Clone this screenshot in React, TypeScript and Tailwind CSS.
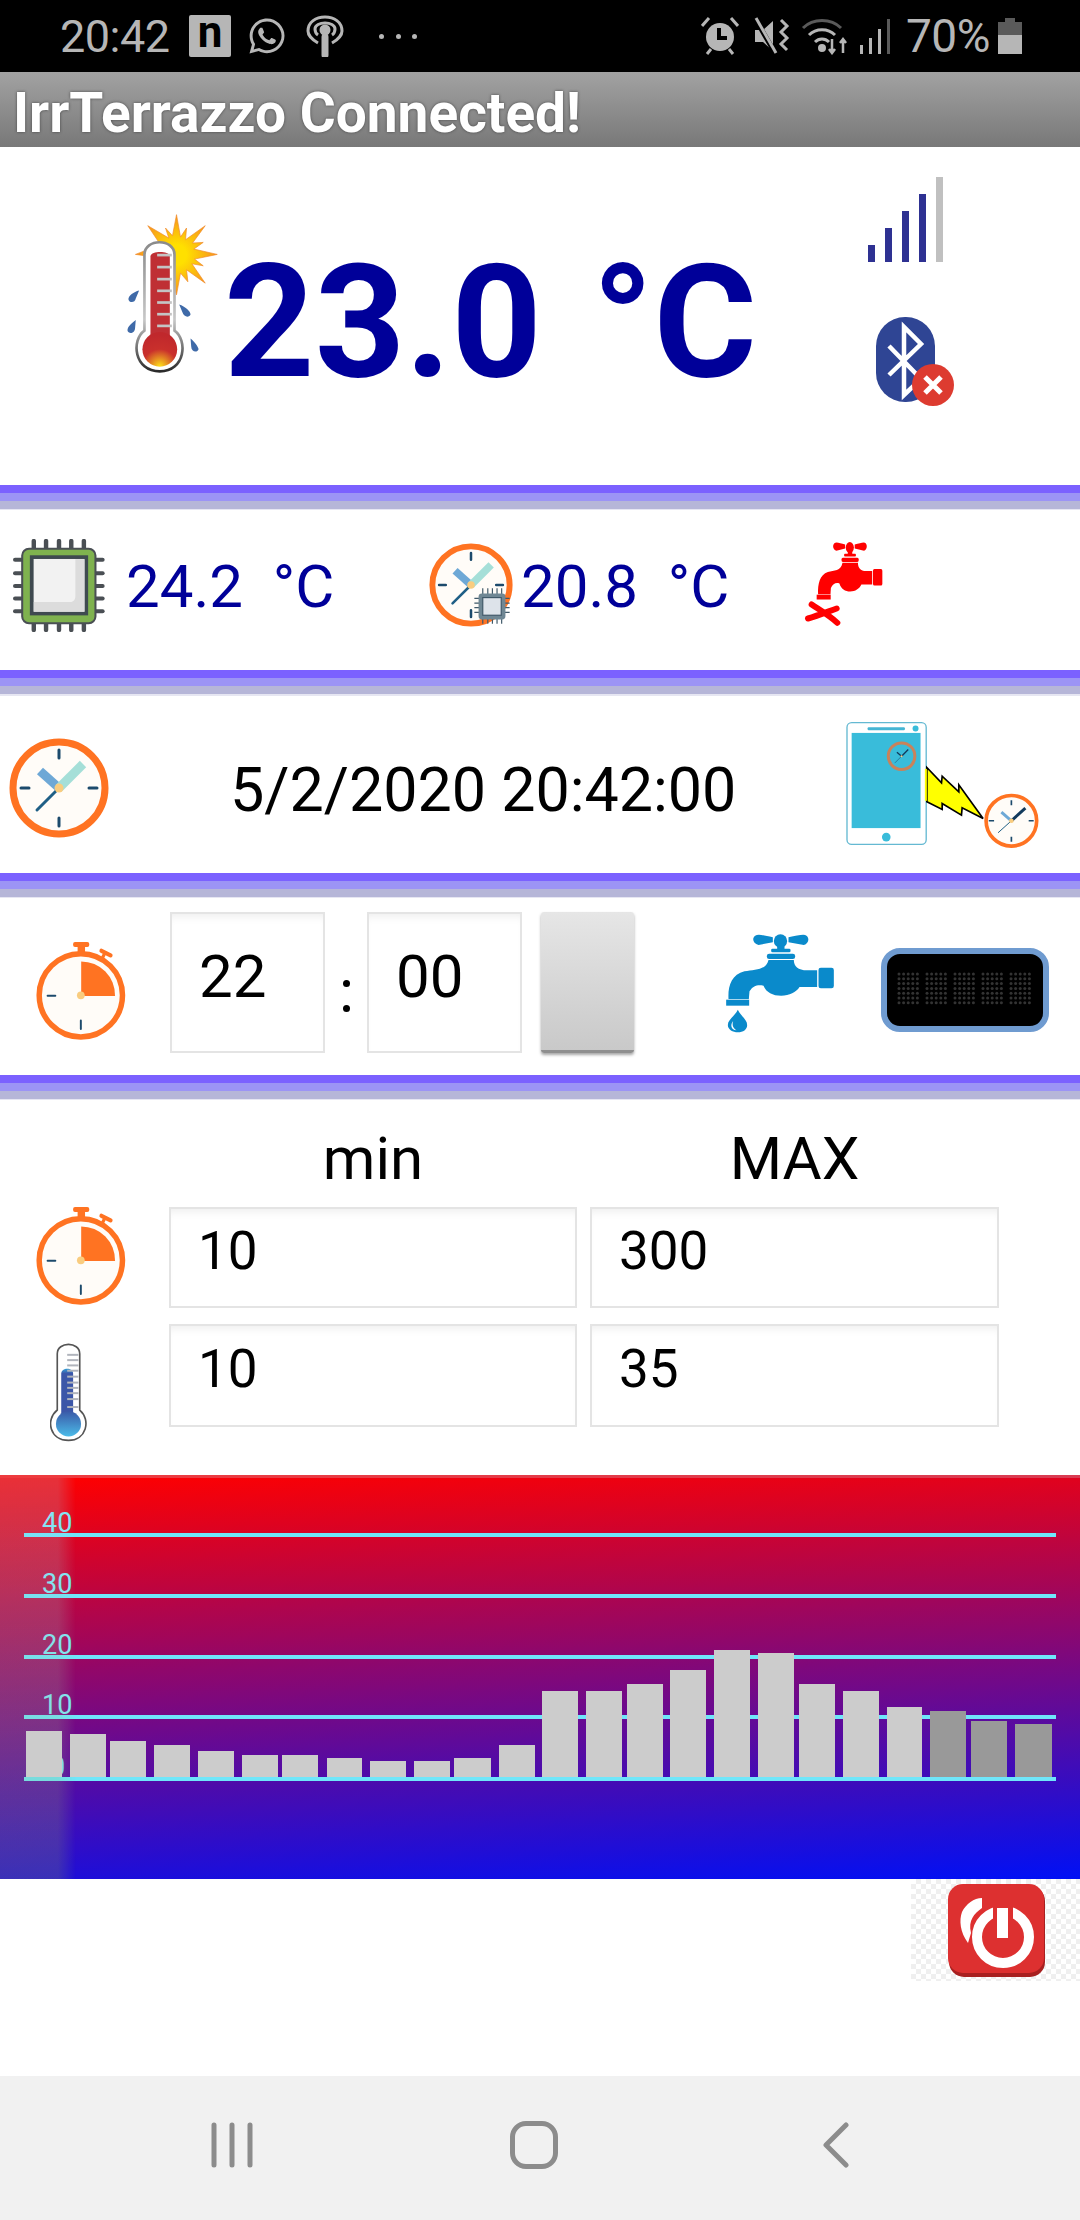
import React from "react";
import { FaWhatsapp } from "react-icons/fa";

function Sep() {
  return (
    <div className="flex flex-col h-[25px] shrink-0">
      <div className="h-[8px] bg-[#7b61ff]" />
      <div className="h-[8px] bg-[#9c94f5]" />
      <div className="h-[8px] bg-[#b6b6d8]" />
      <div className="h-[1px] bg-[#e6e6f2]" />
    </div>
  );
}

function Clock({ className, chip }: { className: string; chip?: boolean }) {
  return (
    <svg viewBox="0 0 100 100" className={className}>
      <circle cx="50" cy="50" r="46" fill="#fffcf8" stroke="#ff7322" strokeWidth="7" />
      <path d="M50 12V20M50 80V88M12 50H20M80 50H88" stroke="#1c4a6c" strokeWidth="3" strokeLinecap="round" />
      <path d="M50 50L31 33" stroke="#6ea8d6" strokeWidth="9" />
      <path d="M50 50L74 26" stroke="#a5dfd8" strokeWidth="9" />
      <path d="M50 50L28 72" stroke="#1f5f86" strokeWidth="3" strokeLinecap="round" />
      <circle cx="50" cy="50" r="4.5" fill="#f9cc7f" />
      {chip && (
        <g>
          <path d="M54 66H96M54 71.5H96M54 77H96M54 82.5H96M64 54V96M70 54V96M75.5 54V96M81 54V96M86.5 54V96" stroke="#3f5868" strokeWidth="1.4" />
          <rect x="59" y="60" width="32" height="31" rx="4" fill="#6f8794" />
          <rect x="64" y="65" width="22" height="21" fill="#dde3ea" stroke="#3f5868" strokeWidth="1.4" />
        </g>
      )}
    </svg>
  );
}

function Stopwatch({ className }: { className: string }) {
  return (
    <svg viewBox="100 70 285 310" className={className}>
      <rect x="218" y="75" width="50" height="15" rx="6" fill="#ff7322" />
      <rect x="232" y="88" width="23" height="22" fill="#ff7322" />
      <path d="M306 102L334 116" stroke="#ff7322" strokeWidth="13" strokeLinecap="round" />
      <path d="M315 112L308 126" stroke="#ff7322" strokeWidth="10" />
      <circle cx="242" cy="240" r="129" fill="#fffcf8" stroke="#ff7322" strokeWidth="17" />
      <path d="M243 135A105 105 0 0 1 348 242L243 242Z" fill="#ff7322" />
      <path d="M139 241H163M242 318V344" stroke="#1c4a6c" strokeWidth="6" strokeLinecap="round" />
      <circle cx="242" cy="240" r="12" fill="#f9cc7f" />
    </svg>
  );
}

function TapShape({ color }: { color: string }) {
  return (
    <g fill={color}>
      <path d="M275 113C250 108 232 102 222 108C211 116 216 132 232 136L275 128Z" />
      <path d="M322 113C350 108 368 102 376 108C386 116 382 132 368 136L322 128Z" />
      <circle cx="298" cy="124" r="20" />
      <rect x="288" y="138" width="22" height="12" />
      <rect x="270" y="147" width="58" height="11" rx="4" />
      <rect x="257" y="162" width="85" height="16" rx="7" />
      <path d="M262 181L338 181C338 200 350 212 378 212L408 212L408 262L355 262C345 278 325 288 300 288C275 288 255 278 247 258C230 254 215 258 205 275L203 298L142 298C140 260 150 225 190 215C220 210 255 212 262 181Z" />
      <rect x="135" y="300" width="69" height="18" />
      <rect x="412" y="204" width="46" height="62" rx="7" />
    </g>
  );
}

function ThermoHot() {
  const ray =
    "M228 165L240 232L258 205L255 240L314 198L276 250L308 248L280 268L350 284L282 298L308 318L274 312L314 370L258 330L262 366L240 340L228 405L205 330L150 290L105 284L180 255L142 198L205 235L195 205L216 228Z";
  return (
    <svg viewBox="80 160 275 485" className="w-[92px] h-[162px] shrink-0">
      <defs>
        <radialGradient id="sun" cx="228" cy="285" r="120" gradientUnits="userSpaceOnUse">
          <stop offset="0.25" stopColor="#ffe000" />
          <stop offset="1" stopColor="#f7941d" />
        </radialGradient>
        <radialGradient id="bulb" cx="178" cy="620" r="95" gradientUnits="userSpaceOnUse">
          <stop offset="0" stopColor="#ffe21a" />
          <stop offset="0.55" stopColor="#c9302c" />
          <stop offset="1" stopColor="#c0282c" />
        </radialGradient>
        <linearGradient id="glass" x1="0" y1="0" x2="0" y2="1">
          <stop offset="0" stopColor="#8a8a8a" />
          <stop offset="0.6" stopColor="#c8c8c8" />
          <stop offset="1" stopColor="#2a2a2a" />
        </linearGradient>
      </defs>
      <path d={ray} fill="url(#sun)" stroke="#f08a2c" strokeWidth="2" />
      <path d="M132 512L132 285C132 235 222 235 222 285L222 512C262 540 255 634 178 634C100 634 92 540 132 512Z" fill="#fff" stroke="url(#glass)" strokeWidth="8" />
      <path d="M150 290C150 272 208 272 208 290L208 530L150 530Z" fill="#bf2f34" />
      <circle cx="178" cy="568" r="52" fill="url(#bulb)" />
      {[286, 322, 358, 393, 428, 463, 498].map((y) => (
        <rect key={y} x={170} y={y - 4} width="44" height="8" fill="#c4c4c4" />
      ))}
      {[
        "M116 392C100 396 84 408 84 418C86 430 104 430 106 416Z",
        "M106 480C92 490 78 504 82 514C88 524 104 518 104 504Z",
        "M236 434C254 440 270 454 270 464C266 474 250 472 246 458Z",
        "M270 536C282 546 294 562 294 568C290 580 272 576 272 560Z",
      ].map((d) => (
        <path key={d} d={d} fill="#3f6aa8" />
      ))}
    </svg>
  );
}

function ThermoCold() {
  return (
    <svg viewBox="150 488 112 298" className="w-[37px] h-[99px] shrink-0">
      <defs>
        <linearGradient id="cold" x1="0" y1="0" x2="0" y2="1">
          <stop offset="0" stopColor="#33a0d8" />
          <stop offset="0.1" stopColor="#3b56a8" />
          <stop offset="1" stopColor="#3b56a8" />
        </linearGradient>
        <linearGradient id="coldBulb" x1="0" y1="0" x2="0" y2="1">
          <stop offset="0" stopColor="#3a5aa8" />
          <stop offset="1" stopColor="#4bbbe8" />
        </linearGradient>
      </defs>
      <path d="M172 690L172 520C172 482 240 482 240 520L240 690C275 720 260 782 206 782C150 782 135 720 172 690Z" fill="#fff" stroke="#555" strokeWidth="5" />
      <path d="M184 580C184 560 220 560 220 580L220 710L184 710Z" fill="url(#cold)" />
      <circle cx="206" cy="732" r="38" fill="url(#coldBulb)" />
      {[520, 536, 552, 568, 586, 604, 620, 636, 654, 678].map((y) => (
        <rect key={y} x={202} y={y} width="34" height="6" fill="#b0b4bc" />
      ))}
    </svg>
  );
}

function Chip() {
  const xs = [98, 134, 172, 208, 245];
  const ys = [270, 310, 348, 385, 423];
  return (
    <svg viewBox="37 208 270 277" preserveAspectRatio="none" className="w-[92px] h-[93px] shrink-0">
      {xs.map((x) => (
        <path key={x} d={`M${x} 214V479`} stroke="#4a4f54" strokeWidth="13" strokeLinecap="round" />
      ))}
      {ys.map((y) => (
        <path key={y} d={`M43 ${y}H300`} stroke="#4a4f54" strokeWidth="12" strokeLinecap="round" />
      ))}
      <rect x="64" y="237" width="215" height="222" rx="20" fill="#7fb24f" stroke="#4a4f54" strokeWidth="6" />
      <rect x="92" y="262" width="160" height="168" fill="#f2f2f2" stroke="#3f4a50" strokeWidth="11" />
      <path d="M98 396H205C215 396 220 388 220 378V268H247V425H98Z" fill="#dcdcdc" />
    </svg>
  );
}

function RedTap() {
  return (
    <svg viewBox="130 90 240 257" className="w-[80px] h-[86px] shrink-0">
      <g transform="translate(168 92) scale(.61 .805) translate(-135 -103)">
        <TapShape color="#ff0000" />
      </g>
      <path d="M153 280C180 298 205 312 230 335M142 322C170 314 200 302 228 292" stroke="#ff0000" strokeWidth="18" strokeLinecap="round" fill="none" />
    </svg>
  );
}

function PhoneSync() {
  return (
    <svg viewBox="250 630 592 386" className="w-[197px] h-[129px] shrink-0">
      <rect x="256" y="637" width="238" height="366" rx="14" fill="#fff" stroke="#64b9d2" strokeWidth="4" />
      <rect x="270" y="668" width="207" height="286" fill="#39bcda" />
      <rect x="318" y="651" width="112" height="9" rx="3" fill="#45b5d4" />
      <circle cx="462" cy="655" r="9" fill="#39bcda" />
      <circle cx="374" cy="981" r="13" fill="#39bcda" />
      <circle cx="420" cy="738" r="40" fill="#39bcda" stroke="#c9825a" strokeWidth="9" />
      <path d="M420 738L440 718M420 738L406 726" stroke="#123a5c" strokeWidth="4" />
      <path d="M420 738L400 758" stroke="#123a5c" strokeWidth="1.5" />
      <circle cx="420" cy="738" r="3" fill="#f9cc7f" />
      <path d="M496 772L540 818L542 798L592 845L592 824L665 925L602 893L600 915L542 880L542 898L496 875Z" fill="#ffff00" stroke="#000" strokeWidth="5" />
      <rect x="490" y="776" width="6" height="96" fill="#ffff00" />
      <circle cx="750" cy="932" r="76" fill="#fffcf8" stroke="#ff7322" strokeWidth="11" />
      <path d="M750 870V885M750 980V995M682 932H698M802 932H817" stroke="#1c4a6c" strokeWidth="5" />
      <path d="M750 932L720 906" stroke="#6ea8d6" strokeWidth="9" />
      <path d="M750 932L792 894" stroke="#123a5c" strokeWidth="9" />
      <path d="M750 932L710 968" stroke="#1f5f86" strokeWidth="3" />
      <circle cx="750" cy="932" r="7" fill="#f9cc7f" />
    </svg>
  );
}

function Led() {
  const dots: React.ReactNode[] = [];
  for (let g = 0; g < 5; g++)
    for (let c = 0; c < 5; c++)
      for (let r = 0; r < 7; r++)
        dots.push(<circle key={`${g}-${c}-${r}`} cx={18 + g * 28 + c * 4.6} cy={26 + r * 4.8} r="1.5" fill="#333333" />);
  return (
    <svg viewBox="0 0 168 84" className="w-[168px] h-[84px] shrink-0">
      <rect x="3" y="3" width="162" height="78" rx="16" fill="#000" stroke="#6f9bd0" strokeWidth="6" />
      {dots}
    </svg>
  );
}

function Box({ w, h, size, text, pt }: { w: string; h: string; size: string; text: string; pt: string }) {
  return (
    <div className={`${w} ${h} ${size} ${pt} shrink-0 pl-[27px] leading-none text-black bg-white border-2 border-[#e4e4e4] shadow-[inset_0_8px_10px_-6px_rgba(0,0,0,0.08)]`}>
      {text}
    </div>
  );
}

const BARS: [number, number, number, string][] = [
  [26, 62, 1731, "#cccccc"], [70, 106, 1734, "#cccccc"], [110, 146, 1741, "#cccccc"], [154, 190, 1745, "#cccccc"],
  [198, 234, 1751, "#cccccc"], [242, 278, 1755, "#cccccc"], [282, 318, 1755, "#cccccc"], [327, 362, 1758, "#cccccc"],
  [370, 406, 1761, "#cccccc"], [414, 450, 1761, "#cccccc"], [454, 491, 1758, "#cccccc"], [499, 535, 1745, "#cccccc"],
  [542, 578, 1691, "#cccccc"], [586, 622, 1691, "#cccccc"], [627, 663, 1684, "#cccccc"], [670, 706, 1670, "#cccccc"],
  [714, 750, 1650, "#cccccc"], [758, 794, 1653, "#cccccc"], [799, 835, 1684, "#cccccc"], [843, 879, 1691, "#cccccc"],
  [887, 922, 1707, "#cccccc"], [930, 966, 1711, "#999999"], [971, 1007, 1721, "#999999"], [1015, 1052, 1724, "#999999"],
];

function Chart() {
  const lines: [number, string, number][] = [[60, "40", 42], [121, "30", 42], [182, "20", 42], [242, "10", 42], [304, "0", 50]];
  return (
    <div className="h-[404px] shrink-0 bg-[linear-gradient(177deg,#ff0000_1%,#0010f5_100%)]">
      <svg viewBox="0 0 1080 404" className="w-[1080px] h-[404px] block">
        <defs>
          <linearGradient id="fade" x1="0" y1="0" x2="1" y2="0">
            <stop offset="0.76" stopColor="#fff" />
            <stop offset="1" stopColor="#000" />
          </linearGradient>
          <linearGradient id="tint" x1="0" y1="0" x2="0" y2="1">
            <stop offset="0" stopColor="#9bdaff" stopOpacity="0.22" />
            <stop offset="1" stopColor="#9bad49" stopOpacity="0.22" />
          </linearGradient>
          <mask id="fadeMask" maskUnits="userSpaceOnUse" x="0" y="0" width="76" height="404">
            <rect x="0" y="0" width="76" height="404" fill="url(#fade)" />
          </mask>
        </defs>
        {lines.map(([y, t, x]) => (
          <g key={t}>
            <text x={x} y={y - 3} fontSize="27" fill="#7fe8f8" fontFamily="Roboto, sans-serif">{t}</text>
            <rect x="24" y={y - 2} width="1032" height="4" fill="#6fe6fa" />
          </g>
        ))}
        <rect x="0" y="3" width="76" height="401" fill="url(#tint)" mask="url(#fadeMask)" />
        <rect x="0" y="0" width="1080" height="3" fill="#c4c4d0" fillOpacity="0.3" />
        {BARS.map(([a, b, top, c]) => (
          <rect key={a} x={a} y={top - 1475} width={b - a} height={1777 - top} fill={c} />
        ))}
      </svg>
    </div>
  );
}

function PowerButton() {
  return (
    <svg viewBox="0 0 97 93" className="w-[97px] h-[93px]">
      <rect x="1" y="2" width="96" height="91" rx="15" fill="#a82020" />
      <rect x="0" y="0" width="96" height="89" rx="15" fill="#dd3030" />
      <circle cx="55" cy="53" r="26" fill="none" stroke="#fff" strokeWidth="10" />
      <rect x="45" y="18" width="20" height="22" fill="#dd3030" />
      <rect x="49" y="24" width="11" height="30" fill="#fff" />
      <path d="M34 14L34 24C26 30 20 36 23 49L20 59C12 48 11 36 14 28C18 20 26 14 34 14Z" fill="#fff" />
    </svg>
  );
}

function StatusBar() {
  return (
    <div className="h-[72px] shrink-0 bg-black flex items-center text-[#b6b6b6]">
      <span className="ml-[60px] w-[112px] text-[45px] leading-none tracking-[-0.5px]">20:42</span>
      <div className="ml-[17px] w-[42px] h-[42px] bg-[#b6b6b6] rounded-[2px] flex items-center justify-center text-black text-[44px] font-bold leading-none pb-[8px]">n</div>
      <FaWhatsapp className="ml-[16px] w-[40px] h-[40px]" />
      <svg viewBox="0 0 38 42" className="ml-[19px] w-[38px] h-[42px]" fill="none" stroke="#b6b6b6" strokeWidth="3">
        <path d="M12 28C5 24 2 19 2 16C2 7 10 2 19 2C28 2 36 7 36 16C36 19 33 24 26 28" />
        <path d="M12 20C9 18 9 15 9 14C9 10 14 8 19 8C24 8 29 10 29 14C29 15 29 18 26 20" />
        <circle cx="19" cy="15" r="4" fill="#b6b6b6" />
        <path d="M19 22V40" strokeWidth="7" strokeLinecap="round" />
      </svg>
      <span className="ml-[35px] w-[38px] flex justify-between">
        <span className="w-[5px] h-[5px] rounded-full bg-[#b6b6b6]" />
        <span className="w-[5px] h-[5px] rounded-full bg-[#b6b6b6]" />
        <span className="w-[5px] h-[5px] rounded-full bg-[#b6b6b6]" />
      </span>
      <svg viewBox="0 0 38 38" className="ml-[284px] w-[38px] h-[38px]" fill="#b6b6b6">
        <circle cx="19" cy="20" r="14" />
        <path d="M18 11V21H26" stroke="#000" strokeWidth="4" fill="none" />
        <path d="M1 9L8 1M37 9L30 1M6 37L10 32M32 37L28 32" stroke="#b6b6b6" strokeWidth="3" />
      </svg>
      <svg viewBox="0 0 38 38" className="ml-[14px] w-[38px] h-[38px]" fill="#b6b6b6">
        <path d="M2 13H10L20 4V34L10 25H2Z" />
        <path d="M3 3L22 36" stroke="#000" strokeWidth="5" />
        <path d="M3 1L23 36" stroke="#b6b6b6" strokeWidth="3" />
        <path d="M28 3L34 9L28 15L34 21L28 27L34 33" stroke="#b6b6b6" strokeWidth="3" fill="none" />
      </svg>
      <svg viewBox="0 0 50 38" className="ml-[10px] w-[50px] h-[38px]" fill="none" stroke="#b6b6b6" strokeWidth="3">
        <path d="M2 11C12 1 30 1 40 11" stroke="#5a5a5a" />
        <path d="M8 18C15 11 27 11 34 18" />
        <path d="M14 25C18 21 24 21 28 25" />
        <circle cx="21" cy="31" r="2.5" fill="#b6b6b6" />
        <path d="M31 22V36M28 32L31 36L34 32M42 36V22M39 26L42 22L45 26" strokeWidth="2.5" />
      </svg>
      <svg viewBox="0 0 32 36" className="ml-[8px] w-[32px] h-[36px]" fill="#b6b6b6">
        <rect x="1" y="27" width="3" height="9" />
        <rect x="10" y="20" width="3" height="16" />
        <rect x="19" y="11" width="3" height="25" />
        <rect x="28" y="1" width="3" height="35" fill="#5a5a5a" />
      </svg>
      <span className="ml-[15px] w-[83px] text-[46px] leading-none tracking-[-0.5px]">70%</span>
      <svg viewBox="0 0 24 36" className="ml-[9px] w-[24px] h-[36px]">
        <rect x="7" y="0" width="10" height="4" fill="#5a5a5a" />
        <rect x="0" y="4" width="24" height="14" fill="#5a5a5a" />
        <rect x="0" y="17" width="24" height="19" fill="#b6b6b6" />
      </svg>
    </div>
  );
}

export default function App() {
  return (
    <div className="w-[1080px] h-[2220px] flex flex-col bg-white overflow-hidden font-[Roboto,sans-serif]">
      <StatusBar />
      <div className="h-[75px] shrink-0 bg-[linear-gradient(to_bottom,#a2a2a2,#787878)] pl-[13px] pt-[7px] flex items-center text-white font-bold text-[55px] leading-none [text-shadow:0_0_3px_rgba(60,60,60,0.9)] whitespace-nowrap">
        IrrTerrazzo Connected!
      </div>

      <div className="h-[338px] shrink-0 flex items-start">
        <div className="ml-[127px] mt-[66px]"><ThermoHot /></div>
        <div className="ml-[5px] mt-[96px] w-[644px] text-[158px] font-bold leading-none text-[#000099] whitespace-pre [word-spacing:11px]">23.0 °C</div>
        <div className="flex flex-col">
          <svg viewBox="0 0 75 85" className="mt-[30px] w-[75px] h-[85px]">
            <rect x="0" y="68" width="7" height="17" fill="#2e3192" />
            <rect x="17" y="51" width="7" height="34" fill="#2e3192" />
            <rect x="34" y="34" width="7" height="51" fill="#2e3192" />
            <rect x="51" y="17" width="7" height="68" fill="#2e3192" />
            <rect x="68" y="0" width="7" height="85" fill="#c0c0c0" />
          </svg>
          <svg viewBox="0 0 80 90" className="mt-[55px] ml-[8px] w-[80px] h-[90px]">
            <rect x="0" y="0" width="59" height="85" rx="29" fill="#2f4594" />
            <path d="M13 29L45 62L28 78V10L45 27L13 58" fill="none" stroke="#fff" strokeWidth="4.5" />
            <circle cx="57" cy="68" r="21" fill="#dd3b30" />
            <path d="M49 60L65 76M65 60L49 76" stroke="#fff" strokeWidth="5" />
          </svg>
        </div>
      </div>
      <Sep />

      <div className="h-[160px] shrink-0 flex items-start text-[60px] leading-none text-[#000099]">
        <div className="ml-[13px] mt-[29px]"><Chip /></div>
        <div className="ml-[21px] mt-[47px] w-[303px] whitespace-pre">24.2  °C</div>
        <div className="mt-[33px]"><Clock chip className="w-[84px] h-[84px] shrink-0" /></div>
        <div className="ml-[8px] mt-[47px] w-[283px] whitespace-pre">20.8  °C</div>
        <div className="mt-[31px]"><RedTap /></div>
      </div>
      <div className="flex flex-col h-[26px] shrink-0">
        <div className="h-[8px] bg-[#7b61ff]" />
        <div className="h-[8px] bg-[#9c94f5]" />
        <div className="h-[8px] bg-[#b6b6d8]" />
        <div className="h-[2px] bg-[#e6e6f2]" />
      </div>

      <div className="h-[177px] shrink-0 flex items-start">
        <div className="ml-[8px] mt-[42px]"><Clock className="w-[102px] h-[100px] shrink-0" /></div>
        <div className="ml-[120px] mt-[64px] w-[615px] text-[61px] leading-none text-black whitespace-nowrap">5/2/2020 20:42:00</div>
        <div className="mt-[24px]"><PhoneSync /></div>
      </div>
      <Sep />

      <div className="h-[177px] shrink-0 flex items-start">
        <div className="ml-[35px] mt-[42px]"><Stopwatch className="w-[92px] h-[101px] shrink-0" /></div>
        <div className="ml-[43px] mt-[14px]"><Box w="w-[155px]" h="h-[141px]" size="text-[60px]" pt="pt-[33px]" text="22" /></div>
        <div className="w-[42px] mt-[14px] h-[141px] flex flex-col items-center gap-[18px] pt-[68px]">
          <span className="w-[7px] h-[7px] rounded-full bg-black" />
          <span className="w-[7px] h-[7px] rounded-full bg-black" />
        </div>
        <div className="mt-[14px]"><Box w="w-[155px]" h="h-[141px]" size="text-[60px]" pt="pt-[33px]" text="00" /></div>
        <div className="ml-[19px] mt-[14px] w-[93px] h-[141px] rounded-[3px] bg-[linear-gradient(to_bottom,#e6e6e6,#c9c9c9)] border-b-[3px] border-[#8f8f8f] shadow-[0_2px_3px_rgba(0,0,0,0.35)]" />
        <svg viewBox="135 103 323 297" className="ml-[92px] mt-[36px] w-[108px] h-[99px] shrink-0">
          <TapShape color="#0a8acb" />
          <path d="M170 330C160 350 140 360 140 376C140 390 155 398 170 398C186 398 198 390 198 376C198 360 180 350 170 330Z" fill="#0a8acb" />
          <path d="M156 364C146 376 150 390 166 392C156 386 152 376 156 364Z" fill="#fff" />
        </svg>
        <div className="ml-[47px] mt-[50px]"><Led /></div>
      </div>
      <Sep />

      <div className="h-[375px] shrink-0 flex flex-col">
        <div className="flex pt-[29px] h-[107px] text-[60px] leading-none text-black">
          <div className="ml-[169px] w-[408px] text-center">min</div>
          <div className="ml-[13px] w-[409px] text-center">MAX</div>
        </div>
        <div className="flex items-start">
          <div className="ml-[35px] mt-[-2px]"><Stopwatch className="w-[92px] h-[101px] shrink-0" /></div>
          <div className="ml-[42px]"><Box w="w-[408px]" h="h-[101px]" size="text-[53px]" pt="pt-[16px]" text="10" /></div>
          <div className="ml-[13px]"><Box w="w-[409px]" h="h-[101px]" size="text-[53px]" pt="pt-[16px]" text="300" /></div>
        </div>
        <div className="flex items-start mt-[16px]">
          <div className="ml-[50px] mt-[19px]"><ThermoCold /></div>
          <div className="ml-[82px]"><Box w="w-[408px]" h="h-[103px]" size="text-[53px]" pt="pt-[17px]" text="10" /></div>
          <div className="ml-[13px]"><Box w="w-[409px]" h="h-[103px]" size="text-[53px]" pt="pt-[17px]" text="35" /></div>
        </div>
      </div>

      <Chart />

      <div className="h-[197px] shrink-0 flex justify-end items-start">
        <div className="w-[169px] h-[102px] pl-[37px] pt-[5px] bg-[repeating-conic-gradient(#efefef_0_25%,#ffffff_0_50%)] bg-[length:10px_10px]">
          <PowerButton />
        </div>
      </div>

      <div className="h-[144px] shrink-0 bg-[#f1f1f1] flex items-start">
        <svg viewBox="0 0 44 46" className="ml-[210px] mt-[46px] w-[44px] h-[46px]" fill="none" stroke="#8c8c8c" strokeWidth="5" strokeLinecap="round">
          <path d="M4 3V43M22 3V43M40 3V43" />
        </svg>
        <div className="ml-[256px] mt-[45px] w-[48px] h-[48px] border-[5px] border-[#8c8c8c] rounded-[16px]" />
        <svg viewBox="0 0 26 46" className="ml-[265px] mt-[46px] w-[26px] h-[46px]" fill="none" stroke="#8c8c8c" strokeWidth="5" strokeLinecap="round" strokeLinejoin="round">
          <path d="M23 3L3 23L23 43" />
        </svg>
      </div>
    </div>
  );
}
